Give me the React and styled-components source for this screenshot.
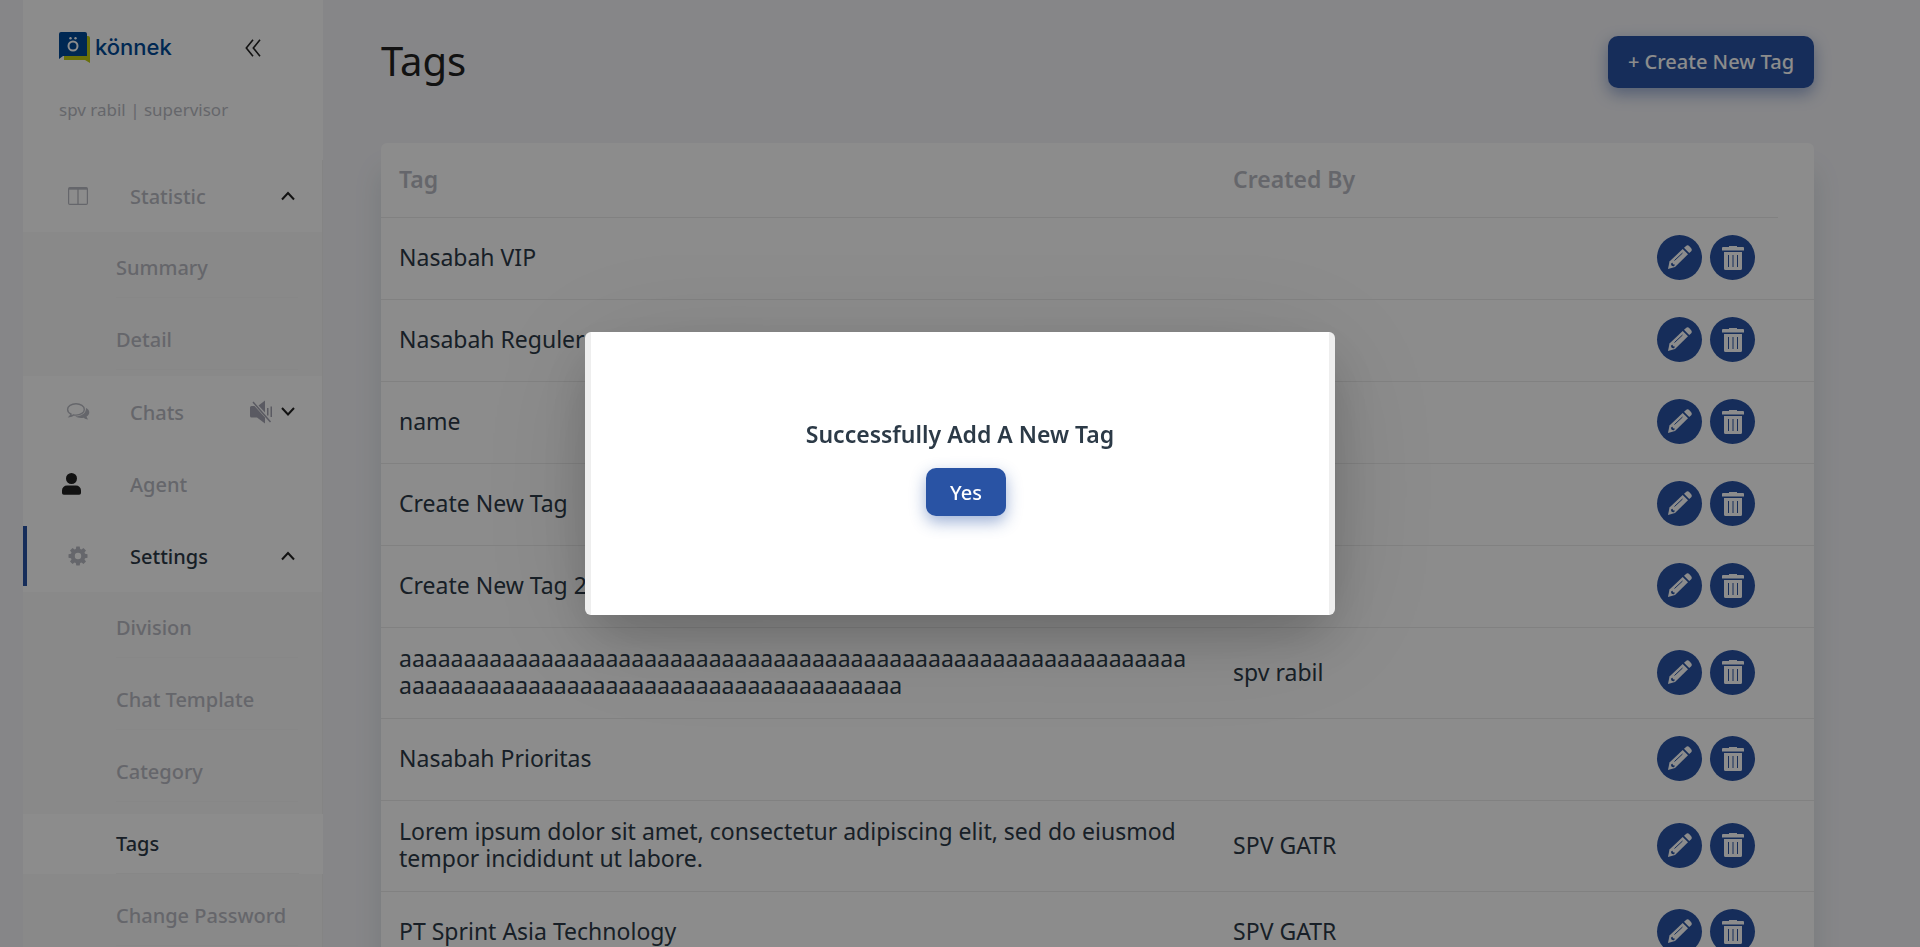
import React from "react";
import styled, { createGlobalStyle, css } from "styled-components";

const font = `"Noto Sans", "Open Sans", sans-serif`;

const GlobalStyle = createGlobalStyle`
  *, *::before, *::after { box-sizing: border-box; }
  body { margin: 0; background: #f4f4f8; font-family: ${font}; color: #2c3a47; }
  body, html { height: 100%; overflow: hidden; }
  button { font-family: inherit; cursor: pointer; border: 0; padding: 0; }
  a { color: inherit; text-decoration: none; }
  ul { list-style: none; margin: 0; padding: 0; }
`;

const Page = styled.div`
  display: flex;
  height: 100vh;
  overflow: hidden;
  padding-left: 23px;
`;

const Sidebar = styled.aside`
  flex: 0 0 300px;
  background: #fff;
  overflow: hidden;
`;

const Brand = styled.header`
  height: 160px;
  padding: 32px 62px 0 36px;
`;

const BrandRow = styled.div`
  display: flex;
  align-items: center;
  justify-content: space-between;
  height: 32px;
`;

const Logo = styled.a`
  display: flex;
  align-items: flex-start;
  gap: 4px;
  height: 32px;
  color: #004a97;
  font: 500 22px/30px Inter, sans-serif;
`;

const CollapseButton = styled.button`
  display: flex;
  background: none;
  color: #222;
`;

const UserLine = styled.p`
  margin: 32px 0 0;
  color: #b9bbc3;
  font-size: 17px;
  line-height: 28px;
`;

const Nav = styled.nav`
  border-right: 1px solid #f0f0f0;
`;

const Item = styled.a`
  display: flex;
  align-items: center;
  height: 72px;
  padding-right: 27px;
  font-size: 20px;
  font-weight: 500;
  color: ${(p) => (p.$active ? "#2c3a47" : "#b9bbc3")};
`;

const ItemIcon = styled.span`
  display: flex;
  justify-content: ${(p) => (p.$start ? "flex-start" : "center")};
  flex: 0 0 107px;
  padding-left: ${(p) => (p.$start ? 39 : 2)}px;
  color: ${(p) => (p.$start ? "#222" : "#b9bbc3")};
`;

const ActiveBar = styled.span`
  align-self: center;
  flex: 0 0 4px;
  height: 60px;
  margin-right: -4px;
  background: #2953a4;
`;

const ItemLabel = styled.span`
  flex: 1;
`;

const ItemTail = styled.span`
  display: flex;
  align-items: center;
  gap: 8px;
  color: #222;
`;

const SubList = styled.ul`
  background: #f9f9f9;
`;

const SubItem = styled.li`
  display: flex;
  align-items: center;
  height: 72px;
`;

const SubLink = styled.a`
  flex: 1;
  height: 60px;
  padding: 0 24px 0 93px;
  font-size: 20px;
  font-weight: 500;
  line-height: 26px;
  color: ${(p) => (p.$active ? "#2c3a47" : "#b9bbc3")};
  background: ${(p) => (p.$active ? "#fff" : "transparent")};
  margin-right: ${(p) => (p.$active ? -1 : 0)}px;
`;

const SubText = styled.span`
  display: flex;
  align-items: center;
  height: 60px;
  border-bottom: 1px solid #f6f6f6;
`;

const Main = styled.main`
  flex: 1;
  min-width: 0;
  padding: 36px 106px 0 58px;
`;

const TitleRow = styled.div`
  display: flex;
  align-items: flex-start;
  justify-content: space-between;
  height: 52px;
  margin-bottom: 55px;
`;

const Title = styled.h1`
  margin: 0;
  font-size: 40px;
  line-height: 50px;
  font-weight: 400;
  color: #222;
`;

const PrimaryButton = styled.button`
  height: ${(p) => (p.$small ? 48 : 52)}px;
  min-width: ${(p) => (p.$small ? 80 : 206)}px;
  padding-bottom: ${(p) => (p.$small ? 0 : 2)}px;
  border-radius: 10px;
  background: #2953a4;
  color: #fff;
  font-size: 20px;
  font-weight: 500;
  box-shadow: 0 6px 16px rgba(41, 83, 164, 0.45);
`;

const Card = styled.section`
  background: #fff;
  border-radius: 6px;
  box-shadow: 0 28px 28px rgba(50, 90, 90, 0.14);
`;

const Table = styled.table`
  width: 100%;
  border-collapse: separate;
  border-spacing: 0;
  table-layout: fixed;
`;

const line = css`
  border-bottom: 1px solid #ececec;
`;

const HeadCell = styled.th`
  ${(p) => !p.$bare && line}
  width: ${(p) => p.$width};
  height: 75px;
  padding: 0 18px 2px;
  text-align: left;
  font-size: 23px;
  line-height: 28px;
  font-weight: 600;
  color: #b9bbc3;
`;

const Cell = styled.td`
  ${line}
  height: 82px;
  padding: 17px 18px 19px;
  font-size: 23px;
  line-height: 27px;
  overflow-wrap: anywhere;
`;

const Actions = styled.div`
  display: flex;
  gap: 8px;
  padding-right: 5px;
  justify-content: flex-end;
`;

const RoundButton = styled.button`
  display: flex;
  align-items: center;
  justify-content: center;
  width: 45px;
  height: 45px;
  border-radius: 50%;
  background: #2953a4;
  color: #fff;
`;

const Overlay = styled.div`
  position: fixed;
  inset: 0;
  display: flex;
  align-items: center;
  justify-content: center;
  background: rgba(0, 0, 0, 0.45);
`;

const Dialog = styled.div`
  display: flex;
  flex-direction: column;
  align-items: center;
  width: 750px;
  max-width: 100%;
  min-height: 283px;
  padding-top: 86px;
  border: solid #eee;
  border-width: 0 6px;
  border-radius: 6px;
  background: #fff;
  box-shadow: 0 24px 50px -6px rgba(0, 0, 0, 0.2), 0 16px 130px rgba(0, 0, 0, 0.12);
`;

const DialogTitle = styled.h2`
  margin: 0 0 18px;
  font-size: 23px;
  line-height: 32px;
  font-weight: 600;
`;

const DialogFoot = styled.div`
  padding-left: 12px;
`;

const LogoMark = () => (
  <svg width="32" height="32" viewBox="0 0 32 32" aria-hidden="true">
    <path d="M5 4H29a2 2 0 0 1 2 2V31L26 28H5Z" fill="#c1cc12" />
    <path d="M2 0H26a2 2 0 0 1 2 2V24H4L0 27V2a2 2 0 0 1 2-2Z" fill="#004a97" />
    <circle cx="14" cy="14" r="4.5" fill="none" stroke="#fff" strokeWidth="2" />
    <circle cx="11.5" cy="6.3" r="1.2" fill="#fff" />
    <circle cx="16.5" cy="6.3" r="1.2" fill="#fff" />
  </svg>
);

const Chevron = ({ up }) => (
  <svg width="14" height="10" viewBox="0 0 14 10" fill="none" stroke="currentColor" strokeWidth="2" aria-hidden="true">
    <path d={up ? "M1 8.5 7 2 13 8.5" : "M1 1 7 7.5 13 1"} />
  </svg>
);

const CollapseIcon = () => (
  <svg width="16" height="18" viewBox="0 0 16 18" fill="none" stroke="currentColor" strokeWidth="1.6" aria-hidden="true">
    <path d="M8 .8 1.3 9 8 17.2M15 .8 8.3 9 15 17.2" />
  </svg>
);

const ColumnsIcon = () => (
  <svg width="20" height="18" viewBox="0 0 20 18" fill="none" stroke="currentColor" aria-hidden="true">
    <rect x=".6" y=".6" width="18.8" height="16.8" rx="1.2" strokeWidth="1.2" />
    <path d="M1 1.7H19" strokeWidth="2" />
    <path d="M10 2V17" strokeWidth="1.3" />
  </svg>
);

const ChatsIcon = () => (
  <svg width="24" height="20" viewBox="0 0 24 20" aria-hidden="true">
    <path d="M10 1.7C5.300 1.700 1.600 4.200 1.600 7.400c0 2 1.400 3.700 3.500 4.700-.3 1-.8 1.700-1.500 2.400 1.600-.2 2.900-.8 4-1.600.8.200 1.600.2 2.400.2 4.700 0 8.300-2.500 8.300-5.700S14.700 1.700 10 1.700Z" fill="none" stroke="currentColor" strokeWidth="1.400" />
    <path d="M20 6c2 .9 3.300 2.300 3.300 4.300 0 1.900-1.100 3.300-2.700 4.300.2 1 .7 1.900 1.600 2.800-1.800-.1-3.300-.7-4.500-1.700-3.200.6-6.400.1-8.400-1.400 6.200.1 11-3 10.700-8.300Z" fill="currentColor" />
  </svg>
);

const MuteIcon = () => (
  <svg width="23" height="24" viewBox="0 0 23 24" fill="#a5a5b2" aria-hidden="true">
    <path d="M0 7.500a1.500 1.500 0 0 1 1.500-1.500H4.500L15 17.500V23.500L7 17.500H1.500A1.500 1.500 0 0 1 0 16Z" />
    <path d="M15 .5V12.500L8.500 5.500Z" />
    <path d="M3 2 20.500 22" stroke="#a5a5b2" strokeWidth="1.500" />
    <path d="M17 8h1.500v7.500H17ZM20.500 6.500H22v10.500h-1.500Z" />
  </svg>
);

const PersonIcon = () => (
  <svg width="19" height="22" viewBox="0 0 19 22" fill="currentColor" aria-hidden="true">
    <circle cx="9.500" cy="5.500" r="5.500" />
    <path d="M5 12.500H14a5 5 0 0 1 5 5V20a1.800 1.800 0 0 1-1.800 1.800H1.800A1.800 1.800 0 0 1 0 20V17.500a5 5 0 0 1 5-5Z" />
  </svg>
);

const GearIcon = () => (
  <svg width="20" height="20" viewBox="0 0 20 20" fill="currentColor" aria-hidden="true">
    <path fillRule="evenodd" d="M8.300.5h3.400l.5 2.500 1.200.5 2.100-1.500 2.500 2.500-1.500 2.100.5 1.200 2.500.5v3.400l-2.500.5-.5 1.200 1.500 2.100-2.500 2.500-2.100-1.500-1.200.5-.5 2.500H8.300l-.5-2.500-1.200-.5L4.500 18 2 15.500l1.500-2.100-.5-1.200-2.500-.5V8.300l2.500-.5.500-1.200L2 4.500 4.500 2l2.100 1.500 1.200-.5ZM10 6.800a3.200 3.200 0 1 0 0 6.400 3.200 3.200 0 0 0 0-6.400Z" />
  </svg>
);

const PencilIcon = () => (
  <svg width="25" height="25" viewBox="0 0 25 25" aria-hidden="true">
    <path d="M2.500 16.500 15.700 4 21 9.300 8 22 1 24Z" fill="currentColor" />
    <path d="M17 2.800 18.800 1.200a2.600 2.600 0 0 1 3.600 0l1.600 1.700a2.600 2.600 0 0 1 0 3.500L22.200 8.100Z" fill="currentColor" />
    <path d="M7.500 15.500 15.500 8" stroke="#2953a4" strokeWidth="1" />
    <path d="M4.200 18.200c-.6 2 .8 3.400 3 3l.6-1.700-1.900-.2-.2-1.500Z" fill="#2953a4" />
  </svg>
);

const TrashIcon = () => (
  <svg width="22" height="24" viewBox="0 0 22 24" aria-hidden="true">
    <path d="M1 1H7V0h8v1h6a1 1 0 0 1 1 1V4.500H0V2a1 1 0 0 1 1-1ZM2 6H20V22.500A1.500 1.500 0 0 1 18.500 24H3.500A1.500 1.500 0 0 1 2 22.500Z" fill="currentColor" />
    <path d="M6.500 9V21M11 9V21M15.500 9V21" stroke="#2953a4" strokeWidth="1" />
  </svg>
);

const statistic = ["Summary", "Detail"];
const settings = ["Division", "Chat Template", "Category", "Tags", "Change Password"];

const rows = [
  ["Nasabah VIP", ""],
  ["Nasabah Reguler", ""],
  ["name", ""],
  ["Create New Tag", ""],
  ["Create New Tag 2", ""],
  ["a".repeat(100), "spv rabil"],
  ["Nasabah Prioritas", ""],
  ["Lorem ipsum dolor sit amet, consectetur adipiscing elit, sed do eiusmod tempor incididunt ut labore.", "SPV GATR"],
  ["PT Sprint Asia Technology", "SPV GATR"],
];

const SubMenu = ({ items, active }) => (
  <SubList>
    {items.map((label) => (
      <SubItem key={label}>
        <SubLink href="#" $active={label === active}>
          <SubText>{label}</SubText>
        </SubLink>
      </SubItem>
    ))}
  </SubList>
);

export default function App() {
  return (
    <>
      <GlobalStyle />
      <Page>
        <Sidebar>
          <Brand>
            <BrandRow>
              <Logo href="#"><LogoMark />könnek</Logo>
              <CollapseButton aria-label="Collapse menu"><CollapseIcon /></CollapseButton>
            </BrandRow>
            <UserLine>spv rabil | supervisor</UserLine>
          </Brand>
          <Nav>
            <Item href="#">
              <ItemIcon><ColumnsIcon /></ItemIcon>
              <ItemLabel>Statistic</ItemLabel>
              <ItemTail><Chevron up /></ItemTail>
            </Item>
            <SubMenu items={statistic} />
            <Item href="#">
              <ItemIcon><ChatsIcon /></ItemIcon>
              <ItemLabel>Chats</ItemLabel>
              <ItemTail><MuteIcon /><Chevron /></ItemTail>
            </Item>
            <Item href="#">
              <ItemIcon $start><PersonIcon /></ItemIcon>
              <ItemLabel>Agent</ItemLabel>
            </Item>
            <Item href="#" $active>
              <ActiveBar />
              <ItemIcon><GearIcon /></ItemIcon>
              <ItemLabel>Settings</ItemLabel>
              <ItemTail><Chevron up /></ItemTail>
            </Item>
            <SubMenu items={settings} active="Tags" />
          </Nav>
        </Sidebar>
        <Main>
          <TitleRow>
            <Title>Tags</Title>
            <PrimaryButton>+ Create New Tag</PrimaryButton>
          </TitleRow>
          <Card>
            <Table>
              <thead>
                <tr>
                  <HeadCell>Tag</HeadCell>
                  <HeadCell $width="27%">Created By</HeadCell>
                  <HeadCell $width="176px" aria-label="Actions" />
                  <HeadCell $width="36px" $bare aria-label="Spacer" />
                </tr>
              </thead>
              <tbody>
                {rows.map(([tag, by]) => (
                  <tr key={tag}>
                    <Cell>{tag}</Cell>
                    <Cell>{by}</Cell>
                    <Cell>
                      <Actions>
                        <RoundButton aria-label="Edit tag"><PencilIcon /></RoundButton>
                        <RoundButton aria-label="Delete tag"><TrashIcon /></RoundButton>
                      </Actions>
                    </Cell>
                    <Cell />
                  </tr>
                ))}
              </tbody>
            </Table>
          </Card>
        </Main>
      </Page>
      <Overlay>
        <Dialog role="dialog" aria-modal="true" aria-labelledby="dialog-title">
          <DialogTitle id="dialog-title">Successfully Add A New Tag</DialogTitle>
          <DialogFoot><PrimaryButton $small>Yes</PrimaryButton></DialogFoot>
        </Dialog>
      </Overlay>
    </>
  );
}
